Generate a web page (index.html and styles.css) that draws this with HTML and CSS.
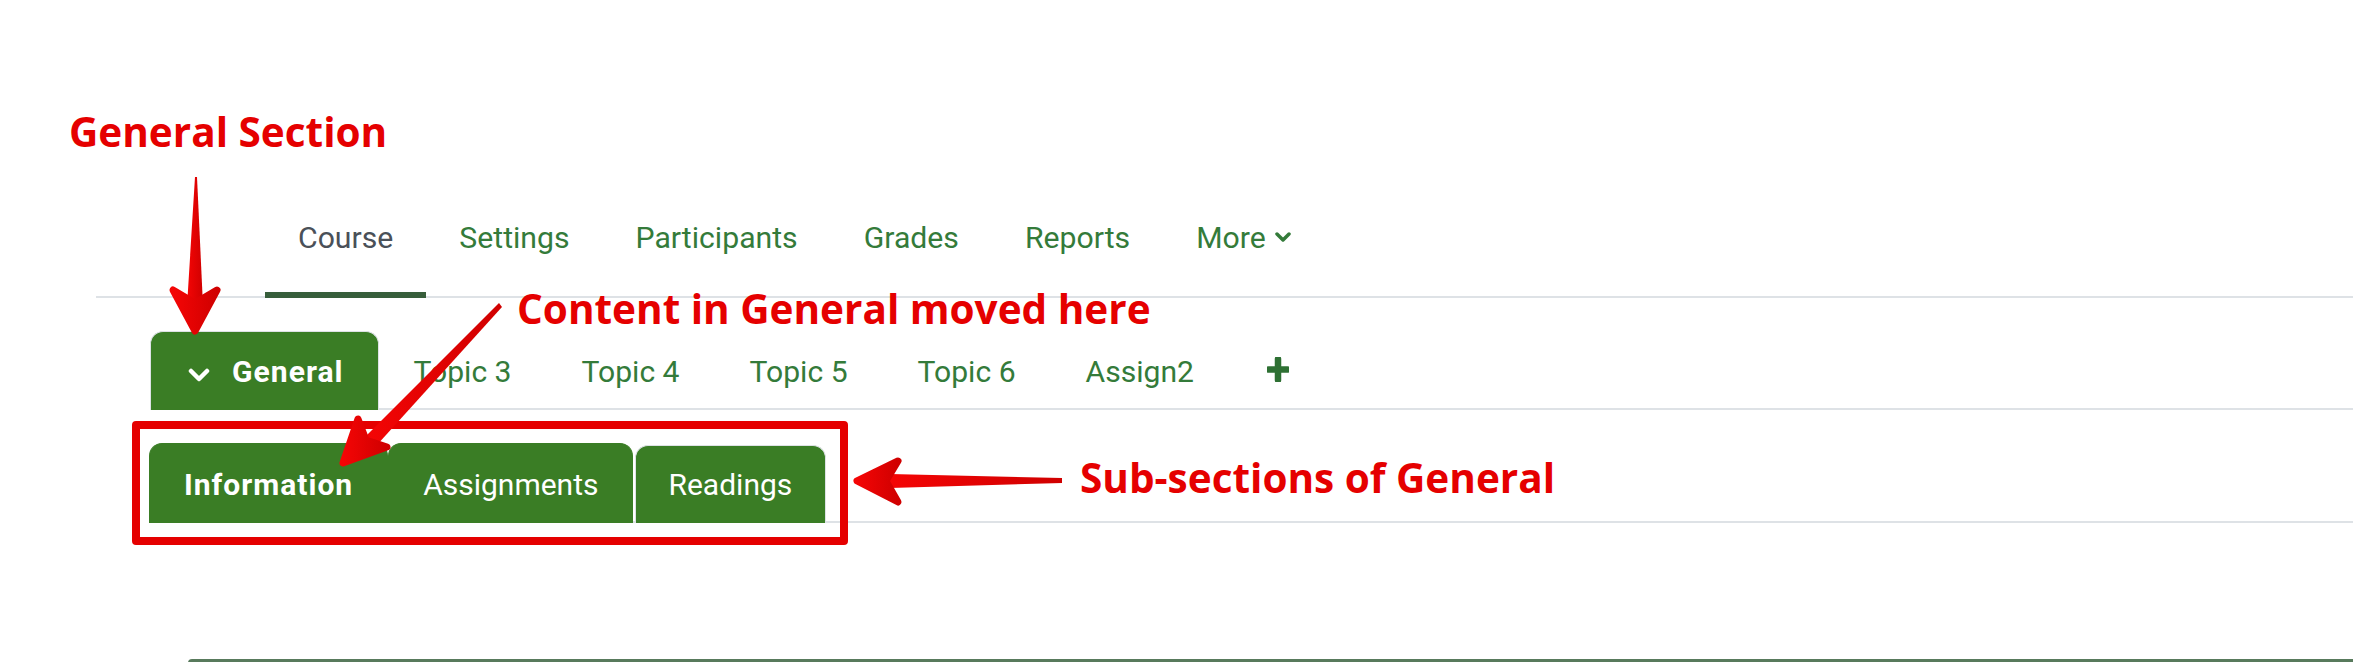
FILE: index.html
```html
<!DOCTYPE html>
<html lang="en">

<head>
    <meta charset="UTF-8" />
    <meta name="viewport" content="width=device-width, initial-scale=1.0" />
    <title>Course - General section</title>
    <link rel="stylesheet" href="styles.css">
</head>

<body>
    <div class="page">
        <!-- Course navigation -->
        <nav class="course-nav">
            <a class="nav-link active">Course</a>
            <a class="nav-link">Settings</a>
            <a class="nav-link">Participants</a>
            <a class="nav-link">Grades</a>
            <a class="nav-link">Reports</a>
            <a class="nav-link">More
                <svg class="caret" viewBox="0 0 16 10" width="16" height="10">
                    <path d="M2 2 L8 8 L14 2" fill="none" stroke="currentColor" stroke-width="3.5" stroke-linecap="round" stroke-linejoin="round" />
                </svg>
            </a>
        </nav>

        <!-- Section tabs -->
        <ul class="section-tabs">
            <li class="tab active">
                <svg class="chevron" viewBox="0 0 22 14" width="22" height="14">
                    <path d="M3 3 L11 11 L19 3" fill="none" stroke="currentColor" stroke-width="4.5" stroke-linecap="round" stroke-linejoin="round" />
                </svg>
                General
            </li>
            <li class="tab">Topic 3</li>
            <li class="tab">Topic 4</li>
            <li class="tab">Topic 5</li>
            <li class="tab">Topic 6</li>
            <li class="tab">Assign2</li>
            <li class="tab tab-add">
                <svg viewBox="0 0 22 25" width="22" height="25">
                    <path d="M11 2 V23 M1.5 12.5 H20.5" fill="none" stroke="currentColor" stroke-width="6.5" stroke-linecap="round" />
                </svg>
            </li>
        </ul>

        <!-- Sub-section tabs -->
        <ul class="sub-tabs">
            <li class="sub-tab current">Information</li>
            <li class="sub-tab">Assignments</li>
            <li class="sub-tab other">Readings</li>
        </ul>

        <div class="course-content"></div>

        <!-- Annotations -->
        <div class="note note-general">General Section</div>
        <div class="note note-content">Content in General moved here</div>
        <div class="note note-sub">Sub-sections of General</div>
        <div class="highlight-box"></div>

        <svg class="arrows" viewBox="0 0 2353 662" width="2353" height="662">
            <defs>
                <linearGradient id="red" x1="0" y1="0" x2="1" y2="0">
                    <stop offset="0" stop-color="#f40505" />
                    <stop offset="1" stop-color="#d00000" />
                </linearGradient>
            </defs>
            <!-- down arrow -->
            <polygon points="195,177 197,177 203,306 187,306" fill="url(#red)" />
            <polygon points="173,290 195,331 217,290 195,303" fill="url(#red)" stroke="url(#red)" stroke-width="7" stroke-linejoin="round" />
            <!-- diagonal arrow -->
            <polygon points="499,303 502,307 376,446 366,436" fill="url(#red)" />
            <polygon points="358,419 343,463 387,447 366,440" fill="url(#red)" stroke="url(#red)" stroke-width="7" stroke-linejoin="round" />
            <!-- left arrow -->
            <polygon points="890,474 1062,478 1062,483 890,488" fill="url(#red)" />
            <polygon points="898,461 857,481 898,502 886,481" fill="url(#red)" stroke="url(#red)" stroke-width="7" stroke-linejoin="round" />
        </svg>
    </div>
</body>

</html>
```

FILE: styles.css
```css
body {
    margin: 0;
    background-color: #fff;
    font-family: Roboto, "Liberation Sans", sans-serif;
}

.page {
    position: relative;
    box-sizing: border-box;
    width: 2353px;
    height: 662px;
    padding-top: 220px;
    overflow: hidden;
}

/* top course navigation */
.course-nav {
    display: flex;
    margin-left: 96px;
    padding-left: 169px;
    border-bottom: 2px solid #dee2e6;
}

.nav-link {
    display: flex;
    align-items: flex-start;
    gap: 9px;
    padding: 0 33px 36px;
    margin-bottom: -2px;
    font-size: 30.2px;
    line-height: 36px;
    color: #347b3a;
    border-bottom: 6px solid transparent;
}

.nav-link.active {
    color: #4a5058;
    border-bottom-color: #375e3b;
}

.caret {
    display: block;
    margin-top: 12px;
}

/* section tabs */
.section-tabs,
.sub-tabs {
    display: flex;
    list-style: none;
    padding: 0;
    margin: 33px 0 0 150px;
    border-bottom: 2px solid #dee2e6;
}

.sub-tabs {
    margin-left: 149px;
}

.tab {
    display: flex;
    padding: 22px 34px 20px;
    margin-bottom: -2px;
    font-size: 30.1px;
    line-height: 36px;
    color: #347b3a;
    border: 1px solid transparent;
    border-bottom: none;
    border-radius: 13px 13px 0 0;
}

.tab.active {
    padding-left: 37px;
    gap: 22px;
    background-color: #3a7d25;
    border-color: #dee2e6;
    color: #fff;
    font-weight: bold;
    letter-spacing: 1px;
}

.chevron {
    display: block;
    margin-top: 14px;
}

.tab-add {
    color: #2e7033;
    padding-left: 37px;
}

.tab-add svg {
    display: block;
    margin-top: 3px;
}

.sub-tab {
    padding: 23px 34px 20px;
    margin-bottom: -2px;
    font-size: 30px;
    line-height: 36px;
    color: #fff;
    background-color: #3a7d25;
    border: 1px solid #3a7d25;
    border-bottom: none;
    border-radius: 13px 13px 0 0;
}

.sub-tab.current {
    font-weight: bold;
    letter-spacing: 1px;
}

.sub-tab.other {
    margin: 2px 0 -2px 2px;
    padding: 21px 33px 20px 32px;
    border-color: #dee2e6;
}

.course-content {
    margin: 136px 0 0 188px;
    height: 20px;
    border-top: 3px solid #587a5c;
    border-top-left-radius: 4px;
}

/* red annotations */
.note {
    position: absolute;
    font-family: "Open Sans", sans-serif;
    font-weight: 700;
    font-size: 40.5px;
    line-height: 40px;
    color: #e50000;
    white-space: nowrap;
}

.note-general {
    left: 69px;
    top: 112px;
}

.note-content {
    left: 517px;
    top: 289px;
}

.note-sub {
    left: 1080px;
    top: 458px;
}

.highlight-box {
    position: absolute;
    left: 132px;
    top: 421px;
    width: 700px;
    height: 108px;
    border: 8px solid #e50000;
    border-radius: 4px;
}

.arrows {
    position: absolute;
    left: 0;
    top: 0;
}
```
